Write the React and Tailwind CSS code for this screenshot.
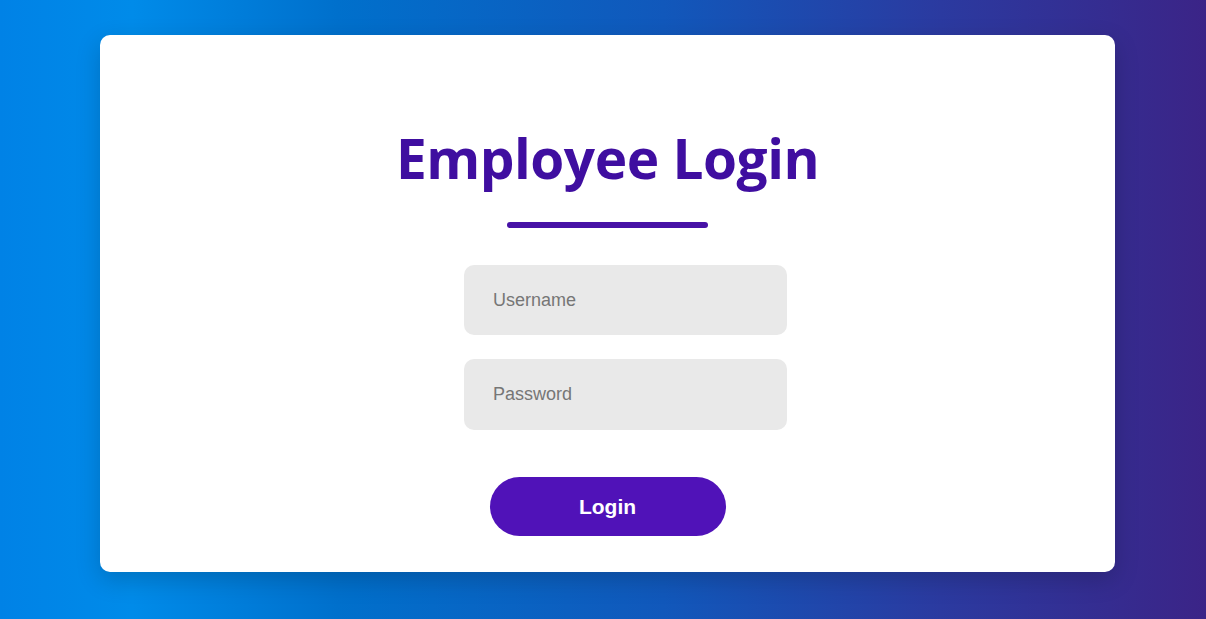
import React from "react"

function App() {
  return (
    <div className="min-h-[619px] w-full bg-[linear-gradient(to_right,#0082e6_0%,#008be9_11%,#0070cc_28%,#1158bb_55%,#2b3aa0_78%,#3b2487_100%)] pt-[35px] pb-[47px]">
      <div className="ml-[100px] w-[1015px] h-[537px] rounded-[10px] bg-white shadow-[0_8px_24px_rgba(0,0,0,0.18)] flex flex-col items-center">
        <h1 className="mt-[83px] text-[#3f0ea0] font-bold text-[55px] leading-[80px] tracking-[-0.5px] font-['Open_Sans',sans-serif]">
          Employee Login
        </h1>
        <div className="mt-[24px] h-[6px] w-[201px] rounded-full bg-[#4712a6]" />

        <form className="mt-[37px] flex flex-col items-center" onSubmit={(e) => e.preventDefault()}>
          <input
            type="text"
            placeholder="Username"
            className="ml-[36px] h-[70px] w-[323px] rounded-[10px] bg-[#e9e9e9] pl-[29px] text-[18px] font-['Liberation_Sans',sans-serif] text-[#444] placeholder:text-[#767676] outline-none"
          />
          <input
            type="password"
            placeholder="Password"
            className="ml-[36px] mt-[24px] h-[71px] w-[323px] rounded-[10px] bg-[#e9e9e9] pl-[29px] text-[18px] font-['Liberation_Sans',sans-serif] text-[#444] placeholder:text-[#767676] outline-none"
          />
          <button
            type="submit"
            className="mt-[47px] h-[59px] w-[236px] rounded-full bg-[#5012b8] text-white font-bold text-[21px] font-['Liberation_Sans',sans-serif]"
          >
            Login
          </button>
        </form>
      </div>
    </div>
  )
}

export default App
